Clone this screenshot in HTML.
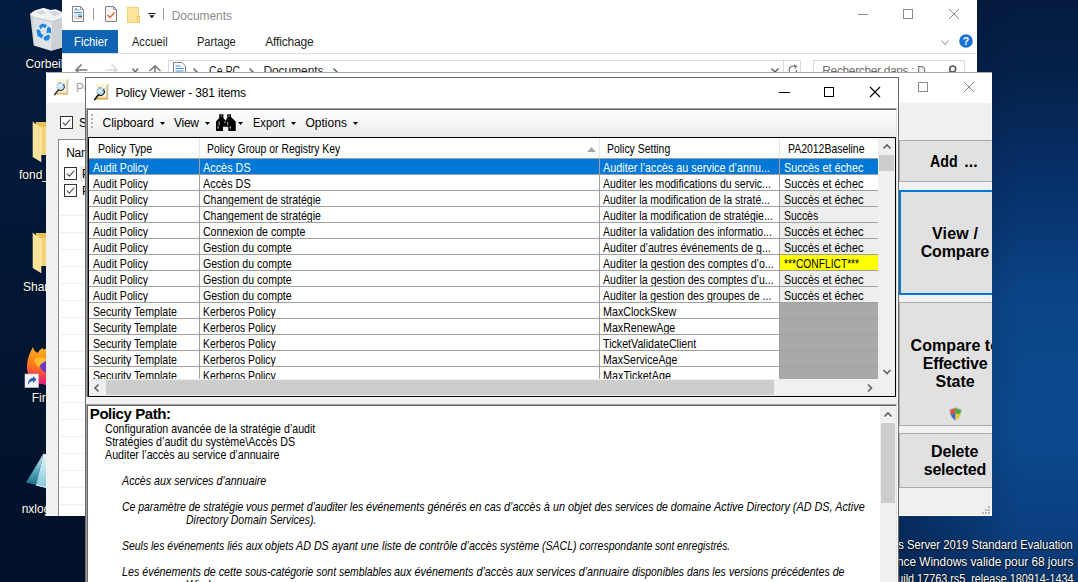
<!DOCTYPE html>
<html lang="fr">
<head>
<meta charset="utf-8">
<title>Policy Viewer - 381 items</title>
<style>
*{box-sizing:border-box;margin:0;padding:0}
html,body{width:1078px;height:582px;overflow:hidden}
body{position:relative;font-family:"Liberation Sans",sans-serif;font-size:12px;color:#000;background:#04112b}
.a{position:absolute}
.t{position:absolute;white-space:pre;transform-origin:0 0}
svg{position:absolute;overflow:visible}
#desk{position:absolute;left:0;top:0;width:1078px;height:582px;overflow:hidden;
 background:linear-gradient(180deg,#031b3e 0,#031a3c 130px,#02142f 380px,#021029 582px)}
#dr{position:absolute;left:500px;top:0;width:578px;height:582px;
 background:linear-gradient(90deg,rgba(3,16,44,.45) 399px,rgba(3,16,44,0) 520px),
 linear-gradient(180deg,#041b3f 0,#05214a 72px,#07306a 180px,#0b4587 300px,#0c4a8e 430px,#0a3f80 530px,#09376f 582px)}
#desk .t{text-shadow:0 1px 2px rgba(0,0,0,.9),0 0 1px rgba(0,0,0,.8)}
#exp{position:absolute;left:62px;top:0;width:915px;height:80px;background:#fff;overflow:hidden}
#main{position:absolute;left:46px;top:72px;width:946px;height:444px;background:#f0f0f0;overflow:hidden}
#view{position:absolute;left:85px;top:77px;width:814px;height:505px;background:#f0f0f0;overflow:hidden}
.btn{position:absolute;background:#e1e1e1;border:1px solid #adadad}
.cell{position:absolute;height:15px}
</style>
</head>
<body>
<div id="desk">
<div id="dr"></div>
<svg style="left:28px;top:6px" width="36" height="48" viewBox="0 0 36 48">
<defs><linearGradient id="rb" x1="0" y1="0" x2="1" y2="0"><stop offset="0" stop-color="#c3c7cc"/><stop offset=".15" stop-color="#dde0e3"/><stop offset="1" stop-color="#e6e8ea"/></linearGradient></defs>
<path d="M2 8 L7 4.500 L15.500 2 L22 4 L28 3.500 L36 7 L36 41 L23 44.700 L5.700 39.600 Z" fill="url(#rb)"/>
<path d="M24 15.500 L36 12 L36 41 L23 44.700 Z" fill="#cdd0d5"/>
<path d="M2 8 L7 4.500 L15.500 2 L22 4 L28 3.500 L36 7 L36 12 L24 15.500 L6 11.500 Z" fill="#f1f2f4"/>
<path d="M8 6.500 L14 4.200 L19 6.500 L13 9 Z M21 6 L27 5 L33 8 L26 10.500 Z" fill="#d3d6da"/>
<path d="M4 10 L6 11.500 L24 15.500 L36 12" fill="none" stroke="#b9bdc2" stroke-width=".8"/>
<path d="M11 19.500 L15 17.500 L19 19 L17.500 22 L14.500 21 L12.500 23.500 Z" fill="#1a86e8"/>
<path d="M20 20.500 L23 22.500 L23 27.500 L20.500 26.500 L18.500 27.500 L19 23 Z" fill="#1a86e8"/>
<path d="M8.500 23.500 L12 24 L13.500 28.500 L15.500 28 L14 32.500 L9.500 30 Z" fill="#1a86e8"/>
<path d="M16.500 30.500 L20.500 28.500 L22.500 30.500 L20.500 34.500 L16.500 34.500 L15.500 32.500 Z" fill="#1a86e8"/>
</svg>
<svg style="left:32px;top:122px" width="16" height="42" viewBox="0 0 16 42">
<rect x="4" y="0" width="12" height="33" fill="#e9c257"/>
<rect x="8.5" y="5" width="8" height="28" fill="#f3d475"/>
<path d="M0.7 0 L9 6 L9 40 L0.7 35 Z" fill="#f9e29a"/>
<path d="M0.7 0 L9 6 L9 40" fill="none" stroke="#fdf0c0" stroke-width=".6"/>
</svg>
<svg style="left:32px;top:233px" width="16" height="42" viewBox="0 0 16 42">
<rect x="4" y="0" width="12" height="33" fill="#e9c257"/>
<rect x="8.5" y="5" width="8" height="28" fill="#f3d475"/>
<path d="M0.7 0 L9 6 L9 40 L0.7 35 Z" fill="#f9e29a"/>
<path d="M0.7 0 L9 6 L9 40" fill="none" stroke="#fdf0c0" stroke-width=".6"/>
</svg>
<svg style="left:24px;top:344px" width="40" height="46" viewBox="0 0 40 46">
<defs><linearGradient id="ff" x1="0" y1="0" x2="0" y2="1"><stop offset="0" stop-color="#ffb21f"/><stop offset=".45" stop-color="#ff7a1a"/><stop offset=".8" stop-color="#f3315a"/><stop offset="1" stop-color="#d91b8a"/></linearGradient></defs>
<path d="M9 3 C10 7 12 8 14 9 C15 6 17 5 19 4 C19 8 22 10 26 12 L30 40 L16 40 C7 37 2 29 3 21 C3.500 14 6 8 9 3 Z" fill="url(#ff)"/>
<circle cx="27" cy="23" r="19" fill="url(#ff)"/>
<ellipse cx="25" cy="21" rx="9" ry="8" fill="#6b35c9"/>
<path d="M10 16 C14 12 22 13 26 16 C20 17 16 20 14 24 Z" fill="#ffbd2e"/>
<rect x="1" y="30" width="13.5" height="13.500" fill="#f4f4f4" stroke="#d0d0d0" stroke-width=".6"/>
<path d="M4 41 C4 36 6 34 9 34 L9 32 L12.500 35.500 L9 39 L9 37 C7 37 5.500 38 4 41 Z" fill="#2a62b8"/>
</svg>
<svg style="left:24px;top:452px" width="30" height="38" viewBox="0 0 30 38">
<defs><linearGradient id="nx" x1="0" y1="0" x2="0" y2="1"><stop offset="0" stop-color="#d9eef3"/><stop offset=".5" stop-color="#5fb0c6"/><stop offset="1" stop-color="#1f6d86"/></linearGradient>
<linearGradient id="nx2" x1="0" y1="0" x2="0" y2="1"><stop offset="0" stop-color="#e8f5f8"/><stop offset="1" stop-color="#7fc8da"/></linearGradient></defs>
<path d="M19.500 1.500 L2 30.500 L12 33 Z" fill="url(#nx)"/>
<path d="M19.500 1.500 L12 33 L24 36 L24 3 Z" fill="url(#nx2)"/>
<path d="M12 33 L24 36" stroke="#f2fbfd" stroke-width="1"/>
</svg>
<span class="t" style="left:25.4px;top:58px;font-size:12px;line-height:12px;color:#fff;">Corbeille</span>
<span class="t" style="left:19.0px;top:169px;font-size:12px;line-height:12px;color:#fff;">fond_ecran</span>
<span class="t" style="left:23.0px;top:281px;font-size:12px;line-height:12px;color:#fff;">Share</span>
<span class="t" style="left:31.7px;top:392px;font-size:12px;line-height:12px;color:#fff;">Firefox</span>
<span class="t" style="left:21.7px;top:503px;font-size:12px;line-height:12px;color:#fff;">nxlog-ce</span>
<span class="t" style="right:5.1px;top:539px;font-size:12px;line-height:12px;color:#fff;transform-origin:100% 0;transform:scaleX(0.9384)">Windows Server 2019 Standard Evaluation</span>
<span class="t" style="right:5.0px;top:556px;font-size:12px;line-height:12px;color:#fff;transform-origin:100% 0;transform:scaleX(0.9837)">Licence Windows valide pour 68 jours</span>
<span class="t" style="right:5.0px;top:573px;font-size:12px;line-height:12px;color:#fff;transform-origin:100% 0;transform:scaleX(0.9015)">Build 17763.rs5_release.180914-1434</span>
</div>
<div id="exp">
<svg style="left:10px;top:6px" width="12" height="16" viewBox="0 0 12 16"><path d="M0.5 0.5 H8.500 L11.500 3.500 V15.500 H0.5 Z" fill="#fff" stroke="#808080" stroke-width="1"/><path d="M8.500 0.5 V3.500 H11.500" fill="none" stroke="#808080" stroke-width=".8"/><path d="M2.500 4.500 L3.800 2.200 L5 4.500 M5.500 4 H7.500" stroke="#2f8be6" fill="none" stroke-width=".9"/><path d="M2 6.500 H10" stroke="#2f8be6" stroke-width="1.100"/><path d="M2 8.800 H5.500 M2 10.800 H5.500 M2 12.800 H10" stroke="#b5b5b5" stroke-width=".9"/><rect x="6.300" y="8.200" width="3.700" height="1.300" fill="#5aa0ea"/><rect x="6.300" y="9.800" width="3.700" height="1.500" fill="#3d6a4a"/></svg>
<div class="a" style="left:31px;top:8px;width:1px;height:12px;background:#a0a0a0"></div>
<svg style="left:43px;top:6px" width="12" height="16" viewBox="0 0 12 16"><path d="M0.5 0.5 H8.500 L11.500 3.500 V15.500 H0.5 Z" fill="#f6f6f6" stroke="#808080" stroke-width="1"/><path d="M8.500 0.5 V3.500 H11.500" fill="none" stroke="#808080" stroke-width=".8"/><path d="M2.500 9 L5 11.500 L9.500 6.500" fill="none" stroke="#ea6a32" stroke-width="1.500"/></svg>
<svg style="left:65px;top:7px" width="13" height="16" viewBox="0 0 13 16"><rect x=".4" y=".4" width="11.200" height="15.200" fill="#fbe59c" stroke="#efce62" stroke-width=".8"/><rect x="10.300" y="9.500" width="2.300" height="6.100" fill="#fbe59c" stroke="#e9c454" stroke-width=".8"/></svg>
<svg style="left:85.5px;top:12px" width="8" height="8" viewBox="0 0 8 8"><rect x="0.3" y="1" width="7.200" height="1" fill="#111"/><path d="M1.200 3.300 H6.600 L3.900 6.300 Z" fill="#111"/></svg>
<div class="a" style="left:101px;top:8px;width:1px;height:12px;background:#a0a0a0"></div>
<div class="a" style="left:796px;top:14px;width:10px;height:1px;background:#8a8a8a"></div>
<div class="a" style="left:841px;top:9px;width:10px;height:10px;border:1px solid #8a8a8a"></div>
<svg style="left:887px;top:9px" width="10" height="10" viewBox="0 0 10 10"><path d="M0 0 L10 10 M10 0 L0 10" stroke="#8a8a8a" stroke-width="1"/></svg>
<div class="a" style="left:0px;top:30px;width:56px;height:23px;background:#0e63b5"></div>
<div class="a" style="left:0px;top:53px;width:915px;height:1px;background:#dadbdc"></div>
<svg style="left:878.5px;top:39.5px" width="8" height="5" viewBox="0 0 8 5"><path d="M0.5 0.5 L4.0 4.5 L7.5 0.5" fill="none" stroke="#8a8a8a" stroke-width="1"/></svg>
<svg style="left:897px;top:34px" width="14" height="14" viewBox="0 0 14 14"><circle cx="7" cy="7" r="6.800" fill="#1673d3"/><text x="7" y="11" font-size="10.5" font-weight="bold" fill="#fff" text-anchor="middle" font-family="Liberation Sans,sans-serif">?</text></svg>
<svg style="left:13px;top:64px" width="13" height="12" viewBox="0 0 13 12"><path d="M6.500 0.5 L1 6 L6.500 11.500 M1 6 H12.500" fill="none" stroke="#7a7a7a" stroke-width="1.600"/></svg>
<svg style="left:42.5px;top:64px" width="13" height="12" viewBox="0 0 13 12"><path d="M6.500 0.5 L12 6 L6.500 11.500 M12 6 H0.5" fill="none" stroke="#d9d9d9" stroke-width="1.600"/></svg>
<svg style="left:69.5px;top:67.5px" width="6.5" height="4.5" viewBox="0 0 6.5 4.5"><path d="M0.5 0.5 L3.25 4.0 L6.0 0.5" fill="none" stroke="#6a6a6a" stroke-width="1.4"/></svg>
<svg style="left:87px;top:64.500px" width="12" height="13" viewBox="0 0 12 13"><path d="M0.5 6 L6 0.8 L11.500 6 M6 0.8 V13" fill="none" stroke="#7a7a7a" stroke-width="1.600"/></svg>
<div class="a" style="left:106px;top:60px;width:616px;height:24px;border:1px solid #d9d9d9;background:#fff"></div>
<div class="a" style="left:721px;top:60px;width:18px;height:24px;border:1px solid #d9d9d9;background:#fff"></div>
<div class="a" style="left:751px;top:60px;width:152px;height:24px;border:1px solid #d9d9d9;background:#fff"></div>
<svg style="left:111px;top:62px" width="13" height="16" viewBox="0 0 13 16"><path d="M0.5 0.5 H9 L12.500 4 V15.500 H0.5 Z" fill="#fff" stroke="#7d7d7d"/><path d="M2.500 4 H7.500 M2.500 6.500 H10.500 M2.500 9 H10.500" stroke="#3f8ad8" stroke-width="1.100"/></svg>
<svg style="left:130.5px;top:67.500px" width="5" height="8" viewBox="0 0 5 8"><path d="M0.5 0.5 L4 4 L0.5 7.500" fill="none" stroke="#555" stroke-width="1.400"/></svg>
<svg style="left:186.5px;top:67.500px" width="5" height="8" viewBox="0 0 5 8"><path d="M0.5 0.5 L4 4 L0.5 7.500" fill="none" stroke="#555" stroke-width="1.400"/></svg>
<svg style="left:270.5px;top:67.500px" width="5" height="8" viewBox="0 0 5 8"><path d="M0.5 0.5 L4 4 L0.5 7.500" fill="none" stroke="#555" stroke-width="1.400"/></svg>
<svg style="left:709px;top:68px" width="8" height="4.5" viewBox="0 0 8 4.5"><path d="M0.5 0.5 L4.0 4.0 L7.5 0.5" fill="none" stroke="#555" stroke-width="1.3"/></svg>
<svg style="left:726px;top:65px" width="10" height="10" viewBox="0 0 10 10"><path d="M8.500 5 A3.700 3.700 0 1 1 5 1.300 H8 M6 0 L8.500 1.300 L6.500 3.500" fill="none" stroke="#6d6d6d" stroke-width="1.100"/></svg>
<svg style="left:885px;top:65px" width="10" height="10" viewBox="0 0 10 10"><circle cx="5.700" cy="4" r="3" fill="none" stroke="#555" stroke-width="1.500"/><path d="M3.500 6.300 L0.5 9.500" stroke="#555" stroke-width="1.500"/></svg>
<span class="t" style="left:109.7px;top:10px;font-size:12px;line-height:12px;color:#8c8c8c;letter-spacing:-0.050px;">Documents</span>
<span class="t" style="left:11.5px;top:36px;font-size:12px;line-height:12px;color:#fff;transform:scaleX(0.9385);">Fichier</span>
<span class="t" style="left:70.2px;top:36px;font-size:12px;line-height:12px;color:#1e1e1e;transform:scaleX(0.9202);">Accueil</span>
<span class="t" style="left:135.1px;top:36px;font-size:12px;line-height:12px;color:#1e1e1e;transform:scaleX(0.9207);">Partage</span>
<span class="t" style="left:203.2px;top:36px;font-size:12px;line-height:12px;color:#1e1e1e;letter-spacing:-0.154px;">Affichage</span>
<span class="t" style="left:146.6px;top:65px;font-size:12px;line-height:12px;color:#1e1e1e;transform:scaleX(0.8799);">Ce PC</span>
<span class="t" style="left:201.4px;top:65px;font-size:12px;line-height:12px;color:#1e1e1e;letter-spacing:-0.063px;">Documents</span>
<span class="t" style="left:760.3px;top:65px;font-size:12px;line-height:12px;color:#6d6d6d;letter-spacing:-0.365px;">Rechercher dans : D</span>
</div>
<div id="main">
<div class="a" style="left:0px;top:0px;width:946px;height:31px;background:#fff"></div>
<div class="a" style="left:0px;top:0px;width:946px;height:1px;background:#a8a8a8"></div>
<div class="a" style="left:0px;top:0px;width:1px;height:31px;background:#f4f4f4"></div>
<div class="a" style="left:945px;top:31px;width:1px;height:413px;background:#fafafa"></div>
<div class="a" style="left:0px;top:443px;width:946px;height:1px;background:#fafafa"></div>
<svg style="left:6.5px;top:6.5px" width="16" height="17" viewBox="0 0 16 17" opacity=".8">
<rect x="3.500" y=".5" width="12" height="15" fill="#f8f7ee"/><rect x="3.500" y=".5" width="12" height="1.300" fill="#fdf3a6"/>
<rect x="14.300" y=".5" width="1.200" height="15" fill="#f6ec9e"/><rect x="13.600" y="1.500" width=".9" height="14" fill="#8e8e8e"/>
<rect x="15" y=".3" width=".9" height="1.200" fill="#c9b93a"/>
<rect x="4" y="12.600" width="9.500" height="1.100" fill="#f9cfa6"/><rect x="3.500" y="14" width="10.500" height="1.500" fill="#e7a534"/>
<rect x="5.500" y="3.600" width="3" height="1" fill="#222"/><rect x="9.500" y="4.600" width="2.500" height=".8" fill="#888"/>
<circle cx="7.500" cy="7.500" r="3.300" fill="#a9ddff"/><circle cx="7" cy="6.800" r="1.700" fill="#e9f5ff"/>
<path d="M10.300 5.500 A3.400 3.400 0 0 1 5.300 10.300" fill="none" stroke="#111" stroke-width="1.100"/>
<path d="M5.300 10.300 A3.400 3.400 0 0 1 5.800 4.400" fill="none" stroke="#9aa" stroke-width=".7"/>
<path d="M5.300 11 L1.800 15.500" stroke="#111" stroke-width="1.700" stroke-linecap="round"/></svg>
<div class="a" style="left:872px;top:10px;width:10px;height:10px;border:1px solid #8a8a8a"></div>
<svg style="left:918px;top:10px" width="10" height="10" viewBox="0 0 10 10"><path d="M0 0 L10 10 M10 0 L0 10" stroke="#8a8a8a" stroke-width="1"/></svg>
<svg style="left:14px;top:44px" width="13" height="13" viewBox="0 0 13 13"><rect x=".5" y=".5" width="12" height="12" fill="#fff" stroke="#333"/><path d="M2.800 6.500 L5.300 9.200 L10.300 3.500" fill="none" stroke="#4a4a4a" stroke-width="1.100"/></svg>
<div class="a" style="left:12px;top:67px;width:840px;height:378px;background:#fff;border:1px solid #828790"></div>
<div class="a" style="left:34px;top:94px;width:8px;height:15px;background:#ebebeb"></div>
<div class="a" style="left:14px;top:109px;width:30px;height:1px;background:#f0f0f0"></div>
<div class="a" style="left:14px;top:126px;width:30px;height:1px;background:#f0f0f0"></div>
<div class="a" style="left:14px;top:143px;width:30px;height:1px;background:#f0f0f0"></div>
<div class="a" style="left:14px;top:160px;width:30px;height:1px;background:#f0f0f0"></div>
<div class="a" style="left:14px;top:177px;width:30px;height:1px;background:#f0f0f0"></div>
<div class="a" style="left:14px;top:194px;width:30px;height:1px;background:#f0f0f0"></div>
<div class="a" style="left:14px;top:211px;width:30px;height:1px;background:#f0f0f0"></div>
<div class="a" style="left:14px;top:228px;width:30px;height:1px;background:#f0f0f0"></div>
<div class="a" style="left:14px;top:245px;width:30px;height:1px;background:#f0f0f0"></div>
<div class="a" style="left:14px;top:262px;width:30px;height:1px;background:#f0f0f0"></div>
<div class="a" style="left:14px;top:279px;width:30px;height:1px;background:#f0f0f0"></div>
<div class="a" style="left:14px;top:296px;width:30px;height:1px;background:#f0f0f0"></div>
<div class="a" style="left:14px;top:313px;width:30px;height:1px;background:#f0f0f0"></div>
<div class="a" style="left:14px;top:330px;width:30px;height:1px;background:#f0f0f0"></div>
<div class="a" style="left:14px;top:347px;width:30px;height:1px;background:#f0f0f0"></div>
<div class="a" style="left:14px;top:364px;width:30px;height:1px;background:#f0f0f0"></div>
<div class="a" style="left:14px;top:381px;width:30px;height:1px;background:#f0f0f0"></div>
<div class="a" style="left:14px;top:398px;width:30px;height:1px;background:#f0f0f0"></div>
<div class="a" style="left:14px;top:415px;width:30px;height:1px;background:#f0f0f0"></div>
<div class="a" style="left:14px;top:432px;width:30px;height:1px;background:#f0f0f0"></div>
<div class="a" style="left:14px;top:449px;width:30px;height:1px;background:#f0f0f0"></div>
<svg style="left:18px;top:95px" width="13" height="13" viewBox="0 0 13 13"><rect x=".5" y=".5" width="12" height="12" fill="#fff" stroke="#333"/><path d="M2.800 6.500 L5.300 9.200 L10.300 3.500" fill="none" stroke="#4a4a4a" stroke-width="1.100"/></svg>
<svg style="left:18px;top:112px" width="13" height="13" viewBox="0 0 13 13"><rect x=".5" y=".5" width="12" height="12" fill="#fff" stroke="#333"/><path d="M2.800 6.500 L5.300 9.200 L10.300 3.500" fill="none" stroke="#4a4a4a" stroke-width="1.100"/></svg>
<div class="a" style="left:853px;top:68px;width:112px;height:42px;background:#e1e1e1;border:1px solid #adadad"></div>
<div class="a" style="left:853px;top:118px;width:112px;height:105px;background:#e1e1e1;border:2px solid #0078d7"></div>
<div class="a" style="left:853px;top:230px;width:112px;height:124px;background:#e1e1e1;border:1px solid #adadad"></div>
<div class="a" style="left:853px;top:361px;width:112px;height:55px;background:#e1e1e1;border:1px solid #adadad"></div>
<svg style="left:903px;top:335px" width="13" height="14" viewBox="0 0 13 14">
<path d="M6.500 0.5 C4.500 1.800 2.500 2.200 0.8 2.200 C0.8 7.500 2.500 11.500 6.500 13.500 Z" fill="#2f6fd0"/>
<path d="M6.500 0.5 C8.500 1.800 10.500 2.200 12.200 2.200 C12.200 7.500 10.500 11.500 6.500 13.500 Z" fill="#e9c531"/>
<path d="M6.500 0.5 C4.500 1.800 2.500 2.200 0.8 2.200 C0.800 4 1 5.500 1.300 6.800 L6.500 6.800 Z" fill="#e0523a"/>
<path d="M6.500 0.5 C8.500 1.800 10.500 2.200 12.200 2.200 C12.200 4 12 5.500 11.700 6.800 L6.500 6.800 Z" fill="#4aa845"/>
<path d="M6.500 0.5 C4.500 1.800 2.500 2.200 0.8 2.200 C0.8 7.500 2.500 11.500 6.500 13.500 C10.500 11.500 12.200 7.500 12.200 2.200 C10.500 2.200 8.500 1.800 6.500 0.5Z" fill="none" stroke="#c8c8c8" stroke-width=".8"/></svg>
<div class="a" style="left:942px;top:434px;width:2px;height:2px;background:#b8b8b8"></div>
<div class="a" style="left:939px;top:437px;width:2px;height:2px;background:#b8b8b8"></div>
<div class="a" style="left:942px;top:437px;width:2px;height:2px;background:#b8b8b8"></div>
<div class="a" style="left:936px;top:440px;width:2px;height:2px;background:#b8b8b8"></div>
<div class="a" style="left:939px;top:440px;width:2px;height:2px;background:#b8b8b8"></div>
<div class="a" style="left:942px;top:440px;width:2px;height:2px;background:#b8b8b8"></div>
<span class="t" style="left:30.0px;top:10px;font-size:12px;line-height:12px;color:#a0a0a0;">Policy Analyzer</span>
<span class="t" style="left:33.0px;top:45px;font-size:12px;line-height:12px;">Show</span>
<span class="t" style="left:20.3px;top:75px;font-size:12px;line-height:12px;letter-spacing:-0.339px;">Name</span>
<span class="t" style="left:36.0px;top:96px;font-size:12px;line-height:12px;">PA2012Baseline</span>
<span class="t" style="left:36.0px;top:113px;font-size:12px;line-height:12px;">PA2012Test</span>
<span class="t" style="left:884.2px;top:82px;font-size:16px;line-height:16px;font-weight:bold;transform:scaleX(0.8872);">Add</span>
<span class="t" style="left:918.3px;top:82px;font-size:16px;line-height:16px;font-weight:bold;letter-spacing:0.078px;">...</span>
<span class="t" style="left:886.0px;top:154px;font-size:16px;line-height:16px;font-weight:bold;letter-spacing:0.167px;">View /</span>
<span class="t" style="left:874.7px;top:172px;font-size:16px;line-height:16px;font-weight:bold;letter-spacing:-0.143px;">Compare</span>
<span class="t" style="left:864.6px;top:266px;font-size:16px;line-height:16px;font-weight:bold;letter-spacing:0.055px;">Compare to</span>
<span class="t" style="left:876.7px;top:284px;font-size:16px;line-height:16px;font-weight:bold;letter-spacing:-0.225px;">Effective</span>
<span class="t" style="left:889.5px;top:302px;font-size:16px;line-height:16px;font-weight:bold;letter-spacing:0.019px;">State</span>
<span class="t" style="left:885.0px;top:372px;font-size:16px;line-height:16px;font-weight:bold;letter-spacing:-0.126px;">Delete</span>
<span class="t" style="left:877.8px;top:390px;font-size:16px;line-height:16px;font-weight:bold;letter-spacing:-0.235px;">selected</span>
</div>
<div id="view">
<div class="a" style="left:0px;top:0px;width:814px;height:32px;background:#fff"></div>
<div class="a" style="left:0px;top:0px;width:814px;height:1px;background:#6a6a6a"></div>
<div class="a" style="left:0px;top:0px;width:1px;height:505px;background:#6a6a6a"></div>
<div class="a" style="left:813px;top:0px;width:1px;height:505px;background:#6a6a6a"></div>
<svg style="left:7.5px;top:6.5px" width="16" height="17" viewBox="0 0 16 17">
<rect x="3.500" y=".5" width="12" height="15" fill="#f8f7ee"/><rect x="3.500" y=".5" width="12" height="1.300" fill="#fdf3a6"/>
<rect x="14.300" y=".5" width="1.200" height="15" fill="#f6ec9e"/><rect x="13.600" y="1.500" width=".9" height="14" fill="#8e8e8e"/>
<rect x="15" y=".3" width=".9" height="1.200" fill="#c9b93a"/>
<rect x="4" y="12.600" width="9.500" height="1.100" fill="#f9cfa6"/><rect x="3.500" y="14" width="10.500" height="1.500" fill="#e7a534"/>
<rect x="5.500" y="3.600" width="3" height="1" fill="#222"/><rect x="9.500" y="4.600" width="2.500" height=".8" fill="#888"/>
<circle cx="7.500" cy="7.500" r="3.300" fill="#a9ddff"/><circle cx="7" cy="6.800" r="1.700" fill="#e9f5ff"/>
<path d="M10.300 5.500 A3.400 3.400 0 0 1 5.300 10.300" fill="none" stroke="#111" stroke-width="1.100"/>
<path d="M5.300 10.300 A3.400 3.400 0 0 1 5.800 4.400" fill="none" stroke="#9aa" stroke-width=".7"/>
<path d="M5.300 11 L1.800 15.500" stroke="#111" stroke-width="1.700" stroke-linecap="round"/></svg>
<div class="a" style="left:694px;top:15px;width:11px;height:1px;background:#000"></div>
<div class="a" style="left:739px;top:10px;width:10px;height:10px;border:1px solid #000"></div>
<svg style="left:785px;top:10px" width="10" height="10" viewBox="0 0 10 10"><path d="M0 0 L10 10 M10 0 L0 10" stroke="#000" stroke-width="1.100"/></svg>
<div class="a" style="left:1px;top:31px;width:812px;height:1px;background:#a0a0a0"></div>
<div class="a" style="left:2px;top:32px;width:810px;height:1px;background:#696969"></div>
<div class="a" style="left:1px;top:31px;width:1px;height:289px;background:#a0a0a0"></div>
<div class="a" style="left:2px;top:32px;width:1px;height:288px;background:#696969"></div>
<div class="a" style="left:811px;top:32px;width:1px;height:288px;background:#e3e3e3"></div>
<div class="a" style="left:812px;top:31px;width:1px;height:290px;background:#fff"></div>
<div class="a" style="left:3px;top:320px;width:808px;height:1px;background:#fafafa"></div>
<div class="a" style="left:1px;top:327px;width:1px;height:190px;background:#a0a0a0"></div>
<div class="a" style="left:2px;top:328px;width:1px;height:190px;background:#696969"></div>
<div class="a" style="left:811px;top:328px;width:1px;height:190px;background:#e3e3e3"></div>
<div class="a" style="left:812px;top:327px;width:1px;height:190px;background:#fff"></div>
<div class="a" style="left:3px;top:33px;width:808px;height:27px;background:linear-gradient(#fdfdfd,#f6f6f6 45%,#ebebeb)"></div>
<div class="a" style="left:7px;top:38px;width:2px;height:2px;background:#fff"></div>
<div class="a" style="left:6px;top:37px;width:2px;height:2px;background:#b4b4b4"></div>
<div class="a" style="left:7px;top:42px;width:2px;height:2px;background:#fff"></div>
<div class="a" style="left:6px;top:41px;width:2px;height:2px;background:#b4b4b4"></div>
<div class="a" style="left:7px;top:46px;width:2px;height:2px;background:#fff"></div>
<div class="a" style="left:6px;top:45px;width:2px;height:2px;background:#b4b4b4"></div>
<div class="a" style="left:7px;top:50px;width:2px;height:2px;background:#fff"></div>
<div class="a" style="left:6px;top:49px;width:2px;height:2px;background:#b4b4b4"></div>
<svg style="left:75px;top:45px" width="5" height="3" viewBox="0 0 5 3"><path d="M0 0 H5 L2.500 3 Z" fill="#000"/></svg>
<svg style="left:120.19999999999999px;top:45px" width="5" height="3" viewBox="0 0 5 3"><path d="M0 0 H5 L2.500 3 Z" fill="#000"/></svg>
<svg style="left:153px;top:45px" width="5" height="3" viewBox="0 0 5 3"><path d="M0 0 H5 L2.500 3 Z" fill="#000"/></svg>
<svg style="left:206.3px;top:45px" width="5" height="3" viewBox="0 0 5 3"><path d="M0 0 H5 L2.500 3 Z" fill="#000"/></svg>
<svg style="left:268.2px;top:45px" width="5" height="3" viewBox="0 0 5 3"><path d="M0 0 H5 L2.500 3 Z" fill="#000"/></svg>
<svg style="left:131px;top:37px" width="20" height="17" viewBox="0 0 20 17">
<path d="M3.200 0.2 H7.400 V4 L9.200 6 V12.500 H7 V17 H0 V7.500 L3.200 4 Z" fill="#000"/>
<path d="M11.200 0.2 H15 V3 L19.700 7.600 V17 H12.300 V12.500 H10 V6 L11.200 3.500 Z" fill="#000"/>
<rect x="7" y="6.500" width="5.300" height="6" fill="#000"/>
<rect x="2.500" y="7.500" width="1.300" height="4" fill="#8a8a8a"/><rect x="1.500" y="12.500" width="1.200" height="2" fill="#cfcfcf"/>
<rect x="11" y="7.500" width="1.200" height="4" fill="#8a8a8a"/><rect x="13.800" y="12.500" width="1.200" height="2" fill="#cfcfcf"/>
<rect x="4.800" y="1" width="1.200" height="1.800" fill="#777"/><rect x="12.300" y="1" width="1.800" height="1.500" fill="#777"/><rect x="8.200" y="7.500" width="1.500" height="1.800" fill="#888"/></svg>
<div class="a" style="left:3px;top:60px;width:808px;height:260px;background:#fff;border:1px solid #000"></div>
<div class="a" style="left:4px;top:81px;width:789px;height:1px;background:#a0a0a0"></div>
<div class="a" style="left:114px;top:61px;width:1px;height:20px;background:#e5e5e5"></div>
<div class="a" style="left:514px;top:61px;width:1px;height:20px;background:#e5e5e5"></div>
<div class="a" style="left:694px;top:61px;width:1px;height:20px;background:#e5e5e5"></div>
<svg style="left:502px;top:69.5px" width="9" height="5" viewBox="0 0 9 5"><path d="M0 5 H9 L4.500 0 Z" fill="#ababab"/></svg>
<div class="a" style="left:4px;top:82px;width:110px;height:15px;background:#0078d7"></div>
<div class="a" style="left:115px;top:82px;width:399px;height:15px;background:#0078d7"></div>
<div class="a" style="left:515px;top:82px;width:179px;height:15px;background:#0078d7"></div>
<div class="a" style="left:695px;top:82px;width:98px;height:15px;background:#0078d7"></div>
<div class="a" style="left:4px;top:97px;width:789px;height:1px;background:#a0a0a0"></div>
<div class="a" style="left:4px;top:113px;width:789px;height:1px;background:#a0a0a0"></div>
<div class="a" style="left:695px;top:114px;width:98px;height:15px;background:#eeeeee"></div>
<div class="a" style="left:4px;top:129px;width:789px;height:1px;background:#a0a0a0"></div>
<div class="a" style="left:695px;top:130px;width:98px;height:15px;background:#eeeeee"></div>
<div class="a" style="left:4px;top:145px;width:789px;height:1px;background:#a0a0a0"></div>
<div class="a" style="left:695px;top:146px;width:98px;height:15px;background:#eeeeee"></div>
<div class="a" style="left:4px;top:161px;width:789px;height:1px;background:#a0a0a0"></div>
<div class="a" style="left:695px;top:162px;width:98px;height:15px;background:#eeeeee"></div>
<div class="a" style="left:4px;top:177px;width:789px;height:1px;background:#a0a0a0"></div>
<div class="a" style="left:695px;top:178px;width:98px;height:15px;background:#ffff00"></div>
<div class="a" style="left:4px;top:193px;width:789px;height:1px;background:#a0a0a0"></div>
<div class="a" style="left:695px;top:194px;width:98px;height:15px;background:#eeeeee"></div>
<div class="a" style="left:4px;top:209px;width:789px;height:1px;background:#a0a0a0"></div>
<div class="a" style="left:695px;top:210px;width:98px;height:15px;background:#eeeeee"></div>
<div class="a" style="left:4px;top:225px;width:789px;height:1px;background:#a0a0a0"></div>
<div class="a" style="left:695px;top:226px;width:98px;height:15px;background:#a9a9a9"></div>
<div class="a" style="left:4px;top:241px;width:789px;height:1px;background:#a0a0a0"></div>
<div class="a" style="left:695px;top:242px;width:98px;height:15px;background:#a9a9a9"></div>
<div class="a" style="left:4px;top:257px;width:789px;height:1px;background:#a0a0a0"></div>
<div class="a" style="left:695px;top:258px;width:98px;height:15px;background:#a9a9a9"></div>
<div class="a" style="left:4px;top:273px;width:789px;height:1px;background:#a0a0a0"></div>
<div class="a" style="left:695px;top:274px;width:98px;height:15px;background:#a9a9a9"></div>
<div class="a" style="left:4px;top:289px;width:789px;height:1px;background:#a0a0a0"></div>
<div class="a" style="left:695px;top:290px;width:98px;height:12px;background:#a9a9a9"></div>
<div class="a" style="left:114px;top:82px;width:1px;height:220px;background:#a0a0a0"></div>
<div class="a" style="left:514px;top:82px;width:1px;height:220px;background:#a0a0a0"></div>
<div class="a" style="left:694px;top:82px;width:1px;height:220px;background:#a0a0a0"></div>
<div class="a" style="left:4px;top:82px;width:789px;height:15px;overflow:hidden"><span class="t" style="left:4.0px;top:2px;font-size:13px;line-height:13px;color:#fff;transform:scaleX(0.8083);">Audit Policy</span><span class="t" style="left:113.8px;top:2px;font-size:13px;line-height:13px;color:#fff;transform:scaleX(0.8357);">Accès DS</span><span class="t" style="left:514.0px;top:2px;font-size:13px;line-height:13px;color:#fff;transform:scaleX(0.8313);">Auditer l’accès au service d’annu...</span><span class="t" style="left:694.9px;top:2px;font-size:13px;line-height:13px;color:#fff;transform:scaleX(0.8313);">Succès et échec</span></div>
<div class="a" style="left:4px;top:98px;width:789px;height:15px;overflow:hidden"><span class="t" style="left:4.0px;top:2px;font-size:13px;line-height:13px;transform:scaleX(0.8083);">Audit Policy</span><span class="t" style="left:113.8px;top:2px;font-size:13px;line-height:13px;transform:scaleX(0.8357);">Accès DS</span><span class="t" style="left:514.0px;top:2px;font-size:13px;line-height:13px;transform:scaleX(0.8092);">Auditer les modifications du servic...</span><span class="t" style="left:694.9px;top:2px;font-size:13px;line-height:13px;transform:scaleX(0.8313);">Succès et échec</span></div>
<div class="a" style="left:4px;top:114px;width:789px;height:15px;overflow:hidden"><span class="t" style="left:4.0px;top:2px;font-size:13px;line-height:13px;transform:scaleX(0.8083);">Audit Policy</span><span class="t" style="left:113.8px;top:2px;font-size:13px;line-height:13px;transform:scaleX(0.8069);">Changement de stratégie</span><span class="t" style="left:514.0px;top:2px;font-size:13px;line-height:13px;transform:scaleX(0.8080);">Auditer la modification de la straté...</span><span class="t" style="left:694.9px;top:2px;font-size:13px;line-height:13px;transform:scaleX(0.8313);">Succès et échec</span></div>
<div class="a" style="left:4px;top:130px;width:789px;height:15px;overflow:hidden"><span class="t" style="left:4.0px;top:2px;font-size:13px;line-height:13px;transform:scaleX(0.8083);">Audit Policy</span><span class="t" style="left:113.8px;top:2px;font-size:13px;line-height:13px;transform:scaleX(0.8069);">Changement de stratégie</span><span class="t" style="left:514.0px;top:2px;font-size:13px;line-height:13px;transform:scaleX(0.8070);">Auditer la modification de stratégie...</span><span class="t" style="left:694.9px;top:2px;font-size:13px;line-height:13px;transform:scaleX(0.7997);">Succès</span></div>
<div class="a" style="left:4px;top:146px;width:789px;height:15px;overflow:hidden"><span class="t" style="left:4.0px;top:2px;font-size:13px;line-height:13px;transform:scaleX(0.8083);">Audit Policy</span><span class="t" style="left:113.8px;top:2px;font-size:13px;line-height:13px;transform:scaleX(0.8096);">Connexion de compte</span><span class="t" style="left:514.0px;top:2px;font-size:13px;line-height:13px;transform:scaleX(0.8060);">Auditer la validation des informatio...</span><span class="t" style="left:694.9px;top:2px;font-size:13px;line-height:13px;transform:scaleX(0.8313);">Succès et échec</span></div>
<div class="a" style="left:4px;top:162px;width:789px;height:15px;overflow:hidden"><span class="t" style="left:4.0px;top:2px;font-size:13px;line-height:13px;transform:scaleX(0.8083);">Audit Policy</span><span class="t" style="left:113.8px;top:2px;font-size:13px;line-height:13px;transform:scaleX(0.8119);">Gestion du compte</span><span class="t" style="left:514.0px;top:2px;font-size:13px;line-height:13px;transform:scaleX(0.8176);">Auditer d’autres événements de g...</span><span class="t" style="left:694.9px;top:2px;font-size:13px;line-height:13px;transform:scaleX(0.8313);">Succès et échec</span></div>
<div class="a" style="left:4px;top:178px;width:789px;height:15px;overflow:hidden"><span class="t" style="left:4.0px;top:2px;font-size:13px;line-height:13px;transform:scaleX(0.8083);">Audit Policy</span><span class="t" style="left:113.8px;top:2px;font-size:13px;line-height:13px;transform:scaleX(0.8119);">Gestion du compte</span><span class="t" style="left:514.0px;top:2px;font-size:13px;line-height:13px;transform:scaleX(0.8141);">Auditer la gestion des comptes d’o...</span><span class="t" style="left:694.9px;top:2px;font-size:13px;line-height:13px;transform:scaleX(0.7875);">***CONFLICT***</span></div>
<div class="a" style="left:4px;top:194px;width:789px;height:15px;overflow:hidden"><span class="t" style="left:4.0px;top:2px;font-size:13px;line-height:13px;transform:scaleX(0.8083);">Audit Policy</span><span class="t" style="left:113.8px;top:2px;font-size:13px;line-height:13px;transform:scaleX(0.8119);">Gestion du compte</span><span class="t" style="left:514.0px;top:2px;font-size:13px;line-height:13px;transform:scaleX(0.8141);">Auditer la gestion des comptes d’u...</span><span class="t" style="left:694.9px;top:2px;font-size:13px;line-height:13px;transform:scaleX(0.8313);">Succès et échec</span></div>
<div class="a" style="left:4px;top:210px;width:789px;height:15px;overflow:hidden"><span class="t" style="left:4.0px;top:2px;font-size:13px;line-height:13px;transform:scaleX(0.8083);">Audit Policy</span><span class="t" style="left:113.8px;top:2px;font-size:13px;line-height:13px;transform:scaleX(0.8119);">Gestion du compte</span><span class="t" style="left:514.0px;top:2px;font-size:13px;line-height:13px;transform:scaleX(0.8086);">Auditer la gestion des groupes de ...</span><span class="t" style="left:694.9px;top:2px;font-size:13px;line-height:13px;transform:scaleX(0.8313);">Succès et échec</span></div>
<div class="a" style="left:4px;top:226px;width:789px;height:15px;overflow:hidden"><span class="t" style="left:4.0px;top:2px;font-size:13px;line-height:13px;transform:scaleX(0.8148);">Security Template</span><span class="t" style="left:113.8px;top:2px;font-size:13px;line-height:13px;transform:scaleX(0.7985);">Kerberos Policy</span><span class="t" style="left:514.0px;top:2px;font-size:13px;line-height:13px;transform:scaleX(0.8238);">MaxClockSkew</span></div>
<div class="a" style="left:4px;top:242px;width:789px;height:15px;overflow:hidden"><span class="t" style="left:4.0px;top:2px;font-size:13px;line-height:13px;transform:scaleX(0.8148);">Security Template</span><span class="t" style="left:113.8px;top:2px;font-size:13px;line-height:13px;transform:scaleX(0.7985);">Kerberos Policy</span><span class="t" style="left:514.0px;top:2px;font-size:13px;line-height:13px;transform:scaleX(0.8201);">MaxRenewAge</span></div>
<div class="a" style="left:4px;top:258px;width:789px;height:15px;overflow:hidden"><span class="t" style="left:4.0px;top:2px;font-size:13px;line-height:13px;transform:scaleX(0.8148);">Security Template</span><span class="t" style="left:113.8px;top:2px;font-size:13px;line-height:13px;transform:scaleX(0.7985);">Kerberos Policy</span><span class="t" style="left:514.0px;top:2px;font-size:13px;line-height:13px;transform:scaleX(0.8215);">TicketValidateClient</span></div>
<div class="a" style="left:4px;top:274px;width:789px;height:15px;overflow:hidden"><span class="t" style="left:4.0px;top:2px;font-size:13px;line-height:13px;transform:scaleX(0.8148);">Security Template</span><span class="t" style="left:113.8px;top:2px;font-size:13px;line-height:13px;transform:scaleX(0.7985);">Kerberos Policy</span><span class="t" style="left:514.0px;top:2px;font-size:13px;line-height:13px;transform:scaleX(0.8161);">MaxServiceAge</span></div>
<div class="a" style="left:4px;top:290px;width:789px;height:12px;overflow:hidden"><span class="t" style="left:4.0px;top:2px;font-size:13px;line-height:13px;transform:scaleX(0.8148);">Security Template</span><span class="t" style="left:113.8px;top:2px;font-size:13px;line-height:13px;transform:scaleX(0.7985);">Kerberos Policy</span><span class="t" style="left:514.0px;top:2px;font-size:13px;line-height:13px;transform:scaleX(0.8304);">MaxTicketAge</span></div>
<span class="t" style="left:30.5px;top:10px;font-size:12px;line-height:12px;letter-spacing:-0.167px;">Policy Viewer - 381 items</span>
<span class="t" style="left:17.5px;top:40px;font-size:12px;line-height:12px;">Clipboard</span>
<span class="t" style="left:89.0px;top:40px;font-size:12px;line-height:12px;letter-spacing:-0.266px;">View</span>
<span class="t" style="left:167.7px;top:40px;font-size:12px;line-height:12px;transform:scaleX(0.9196);">Export</span>
<span class="t" style="left:220.4px;top:40px;font-size:12px;line-height:12px;letter-spacing:0.040px;">Options</span>
<span class="t" style="left:13.1px;top:65px;font-size:13px;line-height:13px;transform:scaleX(0.8181);">Policy Type</span>
<span class="t" style="left:122.2px;top:65px;font-size:13px;line-height:13px;transform:scaleX(0.7981);">Policy Group or Registry Key</span>
<span class="t" style="left:522.1px;top:65px;font-size:13px;line-height:13px;transform:scaleX(0.8024);">Policy Setting</span>
<span class="t" style="left:702.5px;top:65px;font-size:13px;line-height:13px;transform:scaleX(0.8038);">PA2012Baseline</span>
<div class="a" style="left:793px;top:61px;width:17px;height:241px;background:#f0f0f0"></div>
<div class="a" style="left:794px;top:78px;width:15px;height:16px;background:#cdcdcd"></div>
<svg style="left:797.5px;top:66.5px" width="8" height="6" viewBox="0 0 8 6"><path d="M0.5 4.500 L4 1 L7.500 4.500" fill="none" stroke="#606060" stroke-width="1.600"/></svg>
<svg style="left:797.5px;top:292px" width="8" height="6" viewBox="0 0 8 6"><path d="M0.5 1 L4 4.500 L7.500 1" fill="none" stroke="#606060" stroke-width="1.600"/></svg>
<div class="a" style="left:4px;top:302px;width:806px;height:17px;background:#f0f0f0"></div>
<div class="a" style="left:21px;top:303px;width:668px;height:15px;background:#cdcdcd"></div>
<svg style="left:9px;top:306.5px" width="6" height="8" viewBox="0 0 6 8"><path d="M4.500 0.5 L1 4 L4.500 7.500" fill="none" stroke="#606060" stroke-width="1.600"/></svg>
<svg style="left:781.5px;top:306.5px" width="6" height="8" viewBox="0 0 6 8"><path d="M1 0.5 L4.500 4 L1 7.500" fill="none" stroke="#606060" stroke-width="1.600"/></svg>
<div class="a" style="left:2px;top:327px;width:810px;height:1px;background:#a0a0a0"></div>
<div class="a" style="left:3px;top:328px;width:808px;height:1px;background:#696969"></div>
<div class="a" style="left:3px;top:329px;width:808px;height:180px;background:#fff"></div>
<div class="a" style="left:795px;top:329px;width:16px;height:180px;background:#f0f0f0"></div>
<div class="a" style="left:796px;top:346px;width:14px;height:80px;background:#cdcdcd"></div>
<svg style="left:798.5px;top:335px" width="8" height="6" viewBox="0 0 8 6"><path d="M0.5 4.500 L4 1 L7.500 4.500" fill="none" stroke="#606060" stroke-width="1.600"/></svg>
<span class="t" style="left:4.8px;top:329px;font-size:15px;line-height:15px;font-weight:bold;letter-spacing:-0.424px;">Policy Path:</span>
<span class="t" style="left:19.9px;top:345px;font-size:13px;line-height:13px;transform:scaleX(0.8173);">Configuration avancée de la stratégie d’audit</span>
<span class="t" style="left:19.9px;top:358px;font-size:13px;line-height:13px;transform:scaleX(0.8221);">Stratégies d’audit du système\Accès DS</span>
<span class="t" style="left:19.9px;top:371px;font-size:13px;line-height:13px;transform:scaleX(0.8237);">Auditer l’accès au service d’annuaire</span>
<span class="t" style="left:36.6px;top:397px;font-size:13px;line-height:13px;font-style:italic;transform:scaleX(0.8218);">Accès aux services d’annuaire</span>
<span class="t" style="left:36.6px;top:423px;font-size:13px;line-height:13px;font-style:italic;transform:scaleX(0.8032);">Ce paramètre de stratégie </span>
<span class="t" style="left:160.8px;top:423px;font-size:13px;line-height:13px;font-style:italic;transform:scaleX(0.8075);">vous permet d’auditer les </span>
<span class="t" style="left:281.0px;top:423px;font-size:13px;line-height:13px;font-style:italic;transform:scaleX(0.8279);">événements générés en cas </span>
<span class="t" style="left:419.2px;top:423px;font-size:13px;line-height:13px;font-style:italic;transform:scaleX(0.8354);">d’accès à un objet des </span>
<span class="t" style="left:530.3px;top:423px;font-size:13px;line-height:13px;font-style:italic;transform:scaleX(0.8051);">services de domaine </span>
<span class="t" style="left:629.2px;top:423px;font-size:13px;line-height:13px;font-style:italic;transform:scaleX(0.8333);">Active Directory (AD DS, Active</span>
<span class="t" style="left:100.7px;top:436px;font-size:13px;line-height:13px;font-style:italic;transform:scaleX(0.8052);">Directory Domain Services).</span>
<span class="t" style="left:36.6px;top:462px;font-size:13px;line-height:13px;font-style:italic;transform:scaleX(0.8040);">Seuls les événements liés aux </span>
<span class="t" style="left:180.1px;top:462px;font-size:13px;line-height:13px;font-style:italic;transform:scaleX(0.8218);">objets AD DS ayant une </span>
<span class="t" style="left:296.7px;top:462px;font-size:13px;line-height:13px;font-style:italic;transform:scaleX(0.8303);">liste de contrôle d’accès </span>
<span class="t" style="left:414.9px;top:462px;font-size:13px;line-height:13px;font-style:italic;transform:scaleX(0.8085);">système (SACL) correspondante </span>
<span class="t" style="left:570.3px;top:462px;font-size:13px;line-height:13px;font-style:italic;transform:scaleX(0.7824);">sont enregistrés.</span>
<span class="t" style="left:36.6px;top:488px;font-size:13px;line-height:13px;font-style:italic;transform:scaleX(0.8262);">Les événements de cette </span>
<span class="t" style="left:159.6px;top:488px;font-size:13px;line-height:13px;font-style:italic;transform:scaleX(0.8024);">sous-catégorie sont semblables </span>
<span class="t" style="left:309.2px;top:488px;font-size:13px;line-height:13px;font-style:italic;transform:scaleX(0.8323);">aux événements d’accès </span>
<span class="t" style="left:431.3px;top:488px;font-size:13px;line-height:13px;font-style:italic;transform:scaleX(0.8267);">aux services d’annuaire </span>
<span class="t" style="left:547.2px;top:488px;font-size:13px;line-height:13px;font-style:italic;transform:scaleX(0.7995);">disponibles dans les </span>
<span class="t" style="left:643.7px;top:488px;font-size:13px;line-height:13px;font-style:italic;transform:scaleX(0.8154);">versions précédentes de</span>
<span class="t" style="left:100.7px;top:501px;font-size:13px;line-height:13px;font-style:italic;transform:scaleX(0.8233);">Windows.</span>
</div>
</body>
</html>
